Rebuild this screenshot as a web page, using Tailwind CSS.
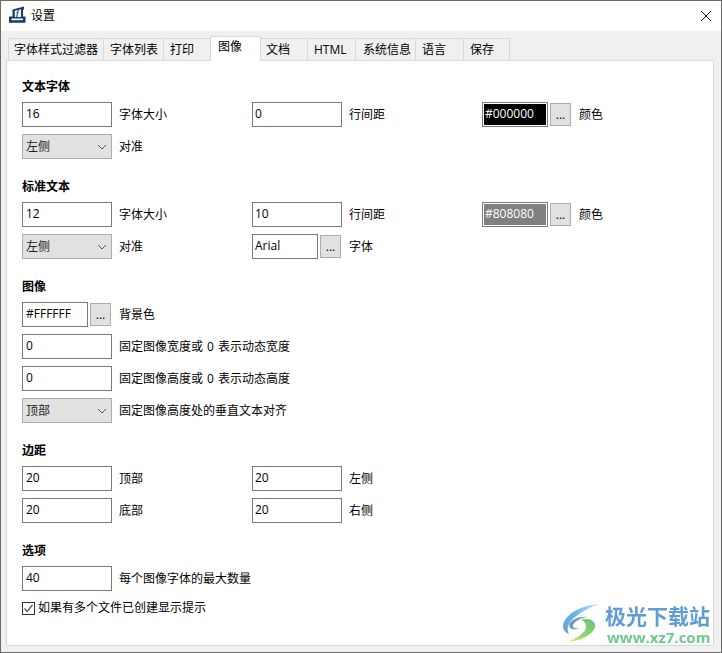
<!DOCTYPE html>
<html lang="zh-CN">
<head>
<meta charset="utf-8">
<title>设置</title>
<script src="https://cdn.jsdelivr.net/npm/@tailwindcss/browser@4"></script>
</head>
<body class="m-0 bg-white">
<div class="relative w-[722px] h-[653px] overflow-hidden border border-[#6b6b6b] bg-[#f0f0f0] text-[12px] leading-[16px] text-black font-['Open_Sans','Noto_Sans_CJK_SC',sans-serif]">

  <!-- title bar -->
  <div class="flex items-center h-[30px] bg-white">
    <svg class="ml-[8px] mb-[3px] w-[17px] h-[17px]" viewBox="0 0 17 17">
      <path d="M3.5 3.5 L15 0.5 V3.5 L14 3.8 V10.5 H16.5 V16.7 H0 V10.5 H3.5 Z" fill="#123f6e"/>
      <path d="M5.8 4.8 L12 3.2 V11 H5.8 Z" fill="#fff"/>
      <path d="M2.5 12.5 H14 V14.2 H2.5 Z" fill="#fff"/>
      <text x="7" y="10" font-size="8" font-weight="700" font-style="italic" font-family="Liberation Serif" fill="#123f6e">f</text>
    </svg>
    <span class="ml-[5px]">设置</span>
    <svg class="ml-auto mr-[10px] w-[10px] h-[10px]" viewBox="0 0 10 10"><path d="M0 0 L10 10 M10 0 L0 10" stroke="#111" stroke-width="1" fill="none"/></svg>
  </div>

  <!-- tabs -->
  <div class="flex items-end h-[24px] mt-[5px] pl-[7px]">
    <div class="w-[95px] h-[22px] pl-[5px] pt-[3px] border-t border-l border-[#d9d9d9]">字体样式过滤器</div>
    <div class="w-[60px] h-[22px] pl-[6px] pt-[3px] border-t border-l border-[#d9d9d9]">字体列表</div>
    <div class="w-[47px] h-[22px] pl-[6px] pt-[3px] border-t border-l border-[#d9d9d9]">打印</div>
    <div class="relative z-10 w-[51px] h-[25px] -mb-px pl-[7px] pt-[2px] border-t border-x border-[#d9d9d9] bg-white">图像</div>
    <div class="w-[46px] h-[22px] pl-[5px] pt-[3px] border-t border-[#d9d9d9]">文档</div>
    <div class="w-[48px] h-[22px] pl-[6px] pt-[3px] border-t border-l border-[#d9d9d9]">HTML</div>
    <div class="w-[60px] h-[22px] pl-[7px] pt-[3px] border-t border-l border-[#d9d9d9]">系统信息</div>
    <div class="w-[48px] h-[22px] pl-[6px] pt-[3px] border-t border-l border-[#d9d9d9]">语言</div>
    <div class="w-[47px] h-[22px] pl-[6px] pt-[3px] border-t border-x border-[#d9d9d9]">保存</div>
  </div>

  <!-- panel -->
  <div class="ml-[5px] w-[708px] h-[586px] pl-[15px] pt-[18px] border border-[#d9d9d9] bg-white">

    <section>
      <h2 class="h-[16px] mb-[7px] font-bold">文本字体</h2>
      <div class="grid grid-cols-[230px_230px_1fr] gap-y-[7px]">
        <div class="flex items-center gap-[7px]"><input value="16" class="w-[90px] h-[25px] pl-[3px] pb-[2px] border border-[#7a7a7a] outline-none"><span>字体大小</span></div>
        <div class="flex items-center gap-[7px]"><input value="0" class="w-[90px] h-[25px] pl-[2px] pb-[2px] border border-[#7a7a7a] outline-none"><span>行间距</span></div>
        <div class="flex items-center">
          <div class="w-[66px] h-[25px] p-px border border-[#7a7a7a] bg-white"><input value="#000000" class="w-full h-full pl-px pb-[2px] bg-black text-white outline-none"></div>
          <button class="ml-[2px] w-[21px] h-[23px] border border-[#adadad] bg-[#e1e1e1]">...</button>
          <span class="ml-[8px]">颜色</span>
        </div>
        <div class="flex items-center gap-[7px]">
          <div class="flex items-center justify-between w-[90px] h-[25px] pl-[3px] pr-[4px] border border-[#adadad] bg-[#e1e1e1] text-[#222]">左侧<svg class="w-[10px] h-[6px]" viewBox="0 0 10 6"><path d="M1 1 L5 5 L9 1" stroke="#555" fill="none"/></svg></div>
          <span>对准</span>
        </div>
      </div>
    </section>

    <section class="mt-[20px]">
      <h2 class="h-[16px] mb-[7px] font-bold">标准文本</h2>
      <div class="grid grid-cols-[230px_230px_1fr] gap-y-[7px]">
        <div class="flex items-center gap-[7px]"><input value="12" class="w-[90px] h-[25px] pl-[3px] pb-[2px] border border-[#7a7a7a] outline-none"><span>字体大小</span></div>
        <div class="flex items-center gap-[7px]"><input value="10" class="w-[90px] h-[25px] pl-[2px] pb-[2px] border border-[#7a7a7a] outline-none"><span>行间距</span></div>
        <div class="flex items-center">
          <div class="w-[66px] h-[25px] p-px border border-[#7a7a7a] bg-white"><input value="#808080" class="w-full h-full pl-px pb-[2px] bg-[#808080] text-white outline-none"></div>
          <button class="ml-[2px] w-[21px] h-[23px] border border-[#adadad] bg-[#e1e1e1]">...</button>
          <span class="ml-[8px]">颜色</span>
        </div>
        <div class="flex items-center gap-[7px]">
          <div class="flex items-center justify-between w-[90px] h-[25px] pl-[3px] pr-[4px] border border-[#adadad] bg-[#e1e1e1] text-[#222]">左侧<svg class="w-[10px] h-[6px]" viewBox="0 0 10 6"><path d="M1 1 L5 5 L9 1" stroke="#555" fill="none"/></svg></div>
          <span>对准</span>
        </div>
        <div class="col-span-2 flex items-center">
          <input value="Arial" class="w-[66px] h-[25px] pl-[2px] pb-[2px] border border-[#7a7a7a] outline-none">
          <button class="ml-[2px] w-[21px] h-[23px] border border-[#adadad] bg-[#e1e1e1]">...</button>
          <span class="ml-[8px]">字体</span>
        </div>
      </div>
    </section>

    <section class="mt-[20px]">
      <h2 class="h-[16px] mb-[7px] font-bold">图像</h2>
      <div class="flex flex-col gap-[7px]">
        <div class="flex items-center">
          <input value="#FFFFFF" class="w-[66px] h-[25px] pl-[3px] pb-[2px] border border-[#7a7a7a] outline-none">
          <button class="ml-[2px] w-[21px] h-[23px] border border-[#adadad] bg-[#e1e1e1]">...</button>
          <span class="ml-[8px]">背景色</span>
        </div>
        <div class="flex items-center gap-[7px]"><input value="0" class="w-[90px] h-[25px] pl-[3px] pb-[2px] border border-[#7a7a7a] outline-none"><span class="[word-spacing:1px]">固定图像宽度或 0 表示动态宽度</span></div>
        <div class="flex items-center gap-[7px]"><input value="0" class="w-[90px] h-[25px] pl-[3px] pb-[2px] border border-[#7a7a7a] outline-none"><span class="[word-spacing:1px]">固定图像高度或 0 表示动态高度</span></div>
        <div class="flex items-center gap-[7px]">
          <div class="flex items-center justify-between w-[90px] h-[25px] pl-[3px] pr-[4px] border border-[#adadad] bg-[#e1e1e1] text-[#222]">顶部<svg class="w-[10px] h-[6px]" viewBox="0 0 10 6"><path d="M1 1 L5 5 L9 1" stroke="#555" fill="none"/></svg></div>
          <span>固定图像高度处的垂直文本对齐</span>
        </div>
      </div>
    </section>

    <section class="mt-[20px]">
      <h2 class="h-[16px] mb-[7px] font-bold">边距</h2>
      <div class="grid grid-cols-[230px_230px_1fr] gap-y-[7px]">
        <div class="flex items-center gap-[7px]"><input value="20" class="w-[90px] h-[25px] pl-[3px] pb-[2px] border border-[#7a7a7a] outline-none"><span>顶部</span></div>
        <div class="flex items-center gap-[7px]"><input value="20" class="w-[90px] h-[25px] pl-[2px] pb-[2px] border border-[#7a7a7a] outline-none"><span>左侧</span></div>
        <div></div>
        <div class="flex items-center gap-[7px]"><input value="20" class="w-[90px] h-[25px] pl-[3px] pb-[2px] border border-[#7a7a7a] outline-none"><span>底部</span></div>
        <div class="flex items-center gap-[7px]"><input value="20" class="w-[90px] h-[25px] pl-[2px] pb-[2px] border border-[#7a7a7a] outline-none"><span>右侧</span></div>
      </div>
    </section>

    <section class="mt-[20px]">
      <h2 class="h-[16px] mb-[7px] font-bold">选项</h2>
      <div class="flex items-center gap-[7px]"><input value="40" class="w-[90px] h-[25px] pl-[3px] pb-[2px] border border-[#7a7a7a] outline-none"><span>每个图像字体的最大数量</span></div>
      <div class="flex items-start mt-[9px]">
        <svg class="mt-[2px] w-[13px] h-[13px]" viewBox="0 0 13 13"><rect x="0.5" y="0.5" width="12" height="12" fill="#fff" stroke="#333"/><path d="M2.5 6.5 L5 9.5 L10.5 3" stroke="#555" stroke-width="1.2" fill="none"/></svg>
        <span class="ml-[3px]">如果有多个文件已创建显示提示</span>
      </div>
    </section>
  </div>

  <!-- watermark overlay -->
  <svg class="absolute left-[554px] top-[594px] w-[60px] h-[50px] blur-[0.4px]" viewBox="0 0 60 50">
    <defs>
      <linearGradient id="wmBlue" x1="1" y1="0" x2="0" y2="1"><stop offset="0" stop-color="#c8e6f8"/><stop offset="0.5" stop-color="#62b3ec"/><stop offset="1" stop-color="#6d9fd0"/></linearGradient>
      <linearGradient id="wmGreen" x1="1" y1="0" x2="0" y2="1"><stop offset="0" stop-color="#5cc47c"/><stop offset="0.6" stop-color="#9bd66a"/><stop offset="1" stop-color="#f4ee8c"/></linearGradient>
    </defs>
    <path d="M44 9 C28 10 10 18 8 31 C8 35 11 38 14 39 C11 34 13 27 20 22 C27 16 36 12 44 9 Z" fill="url(#wmBlue)"/>
    <path d="M32 22 C24 21 15 25 14 30 C14 34 19 36 24 33 C20 34 17 32 18 30 C20 26 26 23 32 22 Z" fill="#6f9cc6"/>
    <path d="M26 25 C34 22 41 26 40 32 C38 40 25 46 13 47 C22 42 31 38 31 32 C31 28 29 26 26 25 Z" fill="url(#wmGreen)"/>
  </svg>
  <div class="absolute left-[604px] top-[604px] text-[21px] leading-[22px] font-bold text-[#5f9dd6] blur-[0.3px] whitespace-nowrap">极光下载站</div>
  <div class="absolute left-[606px] top-[629px] text-[15px] leading-[14px] font-bold text-[#6fc891] blur-[0.3px] whitespace-nowrap">www.xz7.com</div>
</div>
</body>
</html>
